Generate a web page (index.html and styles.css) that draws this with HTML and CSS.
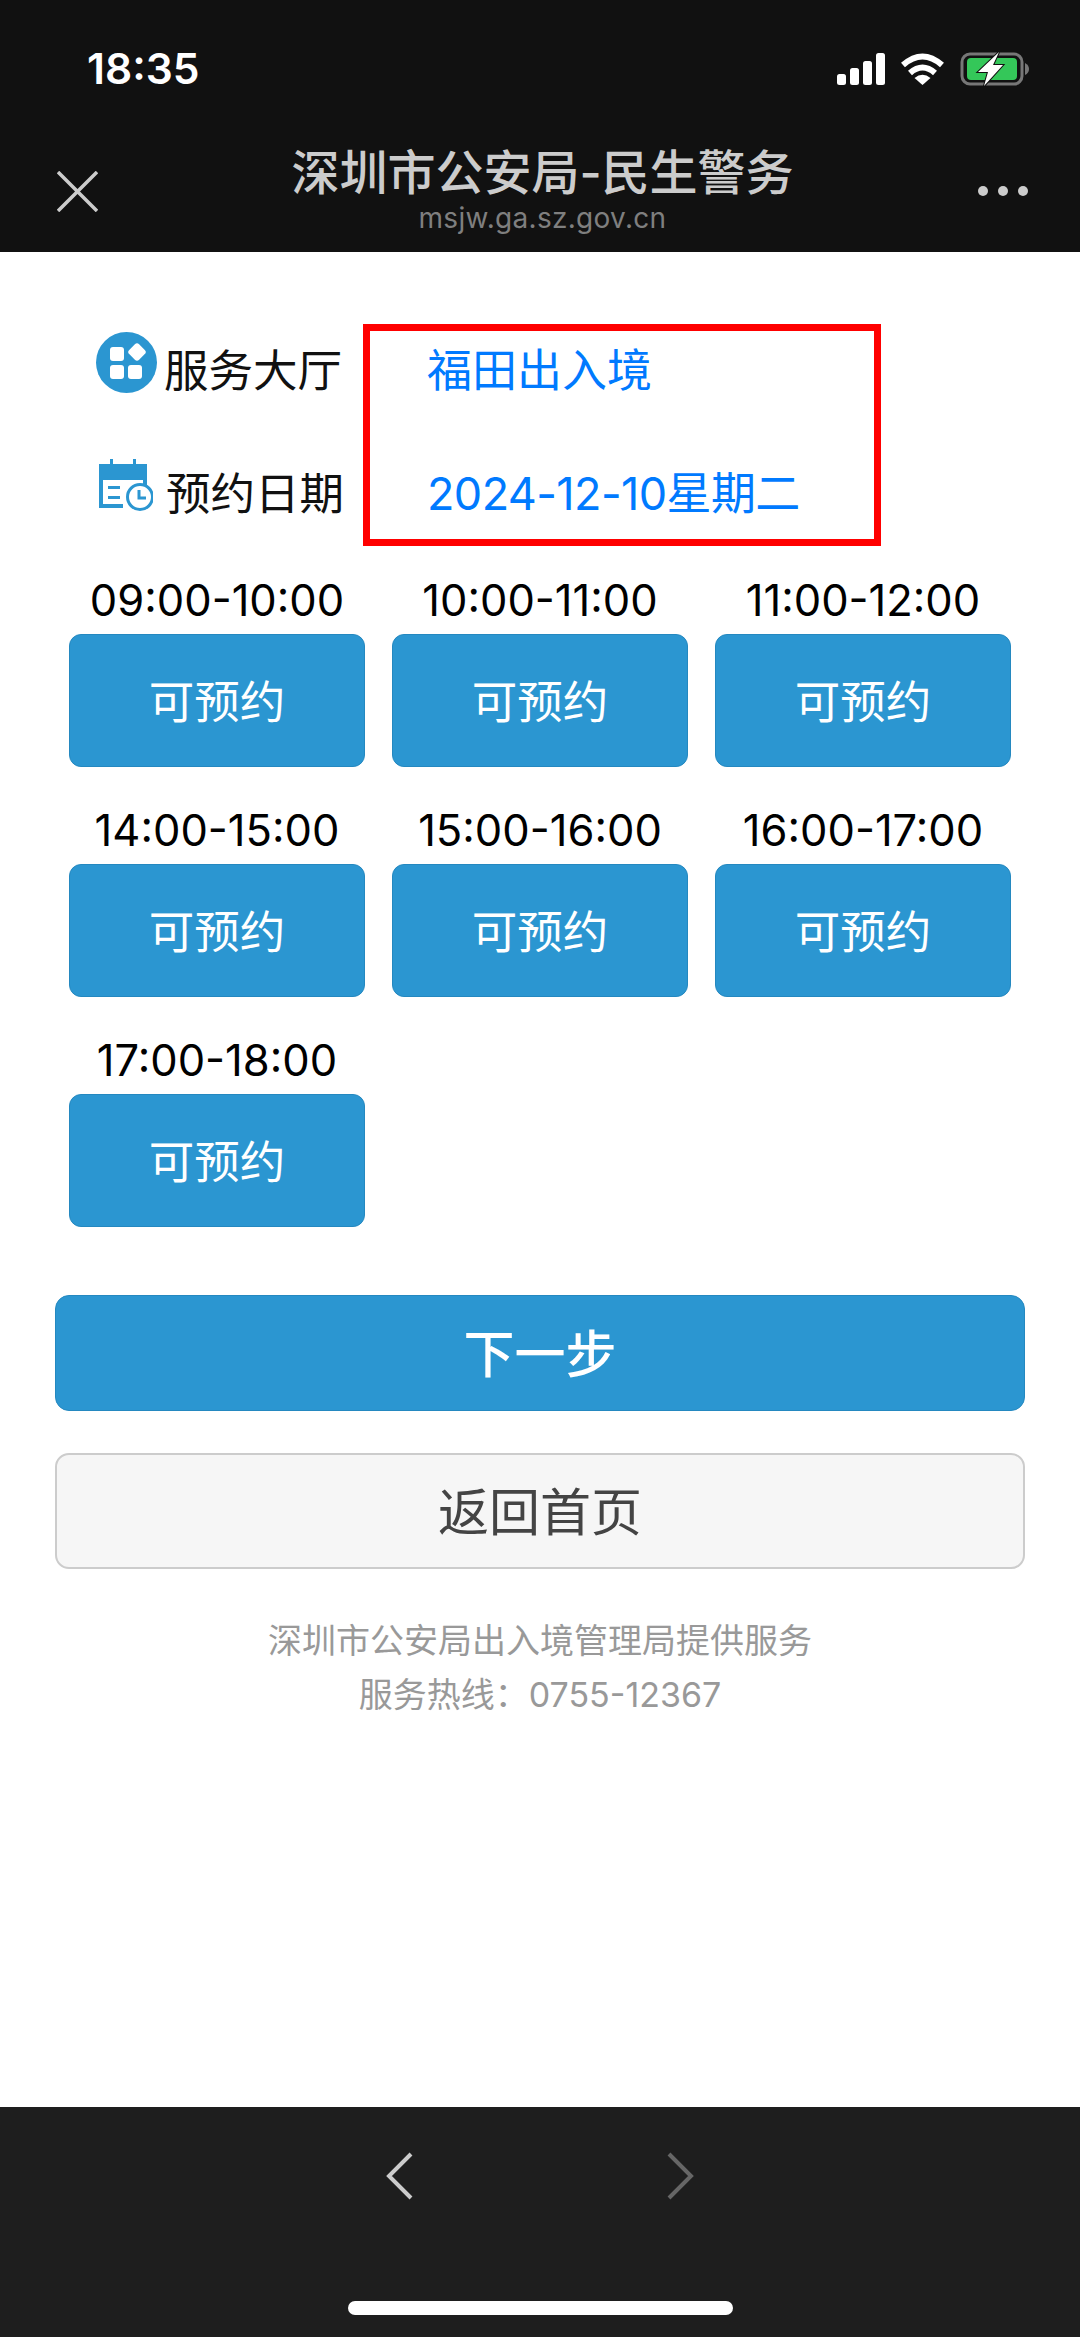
FILE: index.html
```html
<!DOCTYPE html>
<html>
<head>
  <title>深圳市公安局-民生警务</title>
  <link rel="stylesheet" href="styles.css">
</head>
<body>
  <header class="top">
    <div class="statusbar">
      <span class="clock">18:35</span>
      <div class="indicators">
        <svg width="48" height="32" viewBox="0 0 48 32">
          <rect x="0" y="21" width="9" height="11" rx="2.5" fill="#fff"/>
          <rect x="13" y="15" width="9" height="17" rx="2.5" fill="#fff"/>
          <rect x="26" y="8" width="9" height="24" rx="2.5" fill="#fff"/>
          <rect x="39" y="0" width="9" height="32" rx="2.5" fill="#fff"/>
        </svg>
        <svg width="45" height="32" viewBox="0 0 45 32">
          <path d="M3 12 Q22.5 -5 42 12" fill="none" stroke="#fff" stroke-width="6"/>
          <path d="M10 20 Q22.5 9 35 20" fill="none" stroke="#fff" stroke-width="6"/>
          <path d="M22.5 32 L14.5 25 Q22.5 18.5 30.5 25 Z" fill="#fff"/>
        </svg>
        <svg width="70" height="34" viewBox="0 0 70 34">
          <rect x="2" y="2" width="60" height="30" rx="8" fill="none" stroke="#777" stroke-width="3"/>
          <rect x="7" y="6" width="50" height="22" rx="4" fill="#34c759"/>
          <path d="M65 11 Q69 13 69 17 Q69 21 65 23 Z" fill="#777"/>
          <path d="M39 0 L18 20 H28 L24 34 L43 13 H33 Z" fill="#fff" stroke="#111" stroke-width="2" paint-order="stroke"/>
        </svg>
      </div>
    </div>
    <div class="titlebar">
      <svg class="close-icon" width="41" height="41" viewBox="0 0 41 41">
        <path d="M1 1 L40 40 M40 1 L1 40" fill="none" stroke="#ccc" stroke-width="3.5"/>
      </svg>
      <div class="title-block">
        <div class="title">深圳市公安局-民生警务</div>
        <div class="site">msjw.ga.sz.gov.cn</div>
      </div>
      <div class="more"><i></i><i></i><i></i></div>
    </div>
  </header>

  <main class="content">
    <div class="form">
      <div class="row">
        <div class="label">
          <svg class="hall-icon" width="61" height="61" viewBox="0 0 61 61">
            <circle cx="30.5" cy="30.5" r="30.5" fill="#2b96d1"/>
            <rect x="14" y="15" width="14" height="14" rx="3" fill="#fff"/>
            <rect x="14" y="33" width="14" height="14" rx="3" fill="#fff"/>
            <rect x="32" y="33" width="14" height="14" rx="3" fill="#fff"/>
            <rect x="34" y="13" width="14" height="14" rx="3" fill="#fff" transform="rotate(45 41 20)"/>
          </svg>
          <span>服务大厅</span>
        </div>
        <div class="value">福田出入境</div>
      </div>
      <div class="row">
        <div class="label">
          <svg class="date-icon" width="54" height="53" viewBox="0 0 54 53">
            <rect x="0" y="5" width="48" height="16" fill="#2b96d1"/>
            <rect x="11" y="0" width="3" height="5" fill="#2b96d1"/>
            <rect x="34" y="0" width="3" height="5" fill="#2b96d1"/>
            <rect x="0" y="21" width="4" height="28" fill="#2b96d1"/>
            <rect x="0" y="45" width="24" height="4" fill="#2b96d1"/>
            <rect x="44" y="21" width="4" height="6" fill="#2b96d1"/>
            <rect x="9" y="27" width="12" height="3" fill="#2b96d1"/>
            <rect x="9" y="37" width="12" height="3" fill="#2b96d1"/>
            <circle cx="41" cy="38" r="12.5" fill="none" stroke="#2b96d1" stroke-width="3"/>
            <path d="M40 31 V39 H47" fill="none" stroke="#2b96d1" stroke-width="3"/>
          </svg>
          <span>预约日期</span>
        </div>
        <div class="value value-date">2024-12-10星期二</div>
      </div>
      <div class="highlight"></div>
    </div>

    <div class="slots">
      <div class="slot"><div class="slot-time">09:00-10:00</div><button class="slot-btn">可预约</button></div>
      <div class="slot"><div class="slot-time">10:00-11:00</div><button class="slot-btn">可预约</button></div>
      <div class="slot"><div class="slot-time">11:00-12:00</div><button class="slot-btn">可预约</button></div>
      <div class="slot"><div class="slot-time">14:00-15:00</div><button class="slot-btn">可预约</button></div>
      <div class="slot"><div class="slot-time">15:00-16:00</div><button class="slot-btn">可预约</button></div>
      <div class="slot"><div class="slot-time">16:00-17:00</div><button class="slot-btn">可预约</button></div>
      <div class="slot"><div class="slot-time">17:00-18:00</div><button class="slot-btn">可预约</button></div>
    </div>

    <div class="actions">
      <button class="btn btn-next">下一步</button>
      <button class="btn btn-home">返回首页</button>
    </div>

    <div class="footer">
      <div>深圳市公安局出入境管理局提供服务</div>
      <div>服务热线：0755-12367</div>
    </div>
  </main>

  <footer class="toolbar">
    <div class="toolbar-nav">
      <svg width="27" height="48" viewBox="0 0 27 48"><path d="M25 2 L3 24 L25 46" fill="none" stroke="#ccc" stroke-width="4"/></svg>
      <svg width="27" height="48" viewBox="0 0 27 48"><path d="M2 2 L24 24 L2 46" fill="none" stroke="#666" stroke-width="4"/></svg>
    </div>
    <div class="home-indicator"></div>
  </footer>
</body>
</html>
```

FILE: styles.css
```css
* { box-sizing: border-box; }
html, body { margin: 0; padding: 0; }
body { width: 1080px; height: 2337px; display: flex; flex-direction: column; background: #fff; font-family: Inter, "Noto Sans CJK SC", sans-serif; overflow: hidden; }

.top { background: #111; height: 252px; }
.statusbar { height: 95px; padding: 42px 50px 0 87px; display: flex; justify-content: space-between; align-items: center; }
.clock { color: #fff; font-size: 42.5px; font-weight: 600; }
.indicators { display: flex; align-items: center; gap: 15px; }
.indicators svg { overflow: visible; }
.titlebar { height: 157px; padding: 48px 52px 0 57px; display: grid; grid-template-columns: 1fr auto 1fr; align-items: start; }
.close-icon { margin-top: 28px; }
.title-block { text-align: center; }
.title { color: #ccc; font-size: 48px; font-weight: 500; line-height: 60px; }
.site { color: #7f7f7f; font-size: 28px; line-height: 30px; letter-spacing: 0.3px; }
.more { display: flex; justify-content: flex-end; gap: 10px; margin-top: 43px; }
.more i { width: 10px; height: 10px; border-radius: 50%; background: #ccc; }

.content { flex: 1; }
.form { position: relative; padding: 56px 0 0 96px; }
.row { height: 123px; display: flex; align-items: center; }
.label { width: 332px; display: flex; align-items: center; font-size: 44.5px; color: #111; }
.label span { margin-bottom: 4px; }
.hall-icon { margin-right: 7px; margin-bottom: 14px; }
.date-icon { margin-left: 3px; margin-right: 13px; margin-bottom: 14px; }
.value { color: #007aff; font-size: 45px; margin-bottom: 5px; margin-left: -1px; }
.value-date { letter-spacing: -0.6px; }
.highlight { position: absolute; left: 363px; top: 72px; width: 518px; height: 222px; border: 7px solid #f00; }

.slots { margin-top: 13px; padding: 0 69px; display: grid; grid-template-columns: repeat(3, 296px); column-gap: 27px; row-gap: 30px; }
.slot-time { height: 67px; line-height: 66px; text-align: center; font-size: 43.5px; color: #000; }
.slot-btn { display: block; width: 100%; height: 133px; background: #2b96d1; border: 1px solid #2488c0; border-radius: 12px; color: #fff; font-family: inherit; font-size: 45.5px; padding: 0 0 4px; }

.actions { margin-top: 68px; padding: 0 55px; display: flex; flex-direction: column; gap: 42px; }
.btn { display: block; width: 100%; height: 116px; border-radius: 14px; font-family: inherit; font-size: 51px; padding: 0 0 4px; }
.btn-next { background: #2b96d1; border: 1px solid #2488c0; color: #fff; font-weight: 500; }
.btn-home { background: #f6f6f6; border: 2px solid #ccc; color: #444; }

.footer { margin-top: 45px; text-align: center; color: #999; font-size: 34px; line-height: 54px; }

.toolbar { height: 230px; background: #1e1e1e; padding-top: 45px; display: flex; flex-direction: column; align-items: center; }
.toolbar-nav { display: flex; gap: 254px; }
.home-indicator { width: 385px; height: 14px; border-radius: 7px; background: #fff; margin-top: 101px; }
```
